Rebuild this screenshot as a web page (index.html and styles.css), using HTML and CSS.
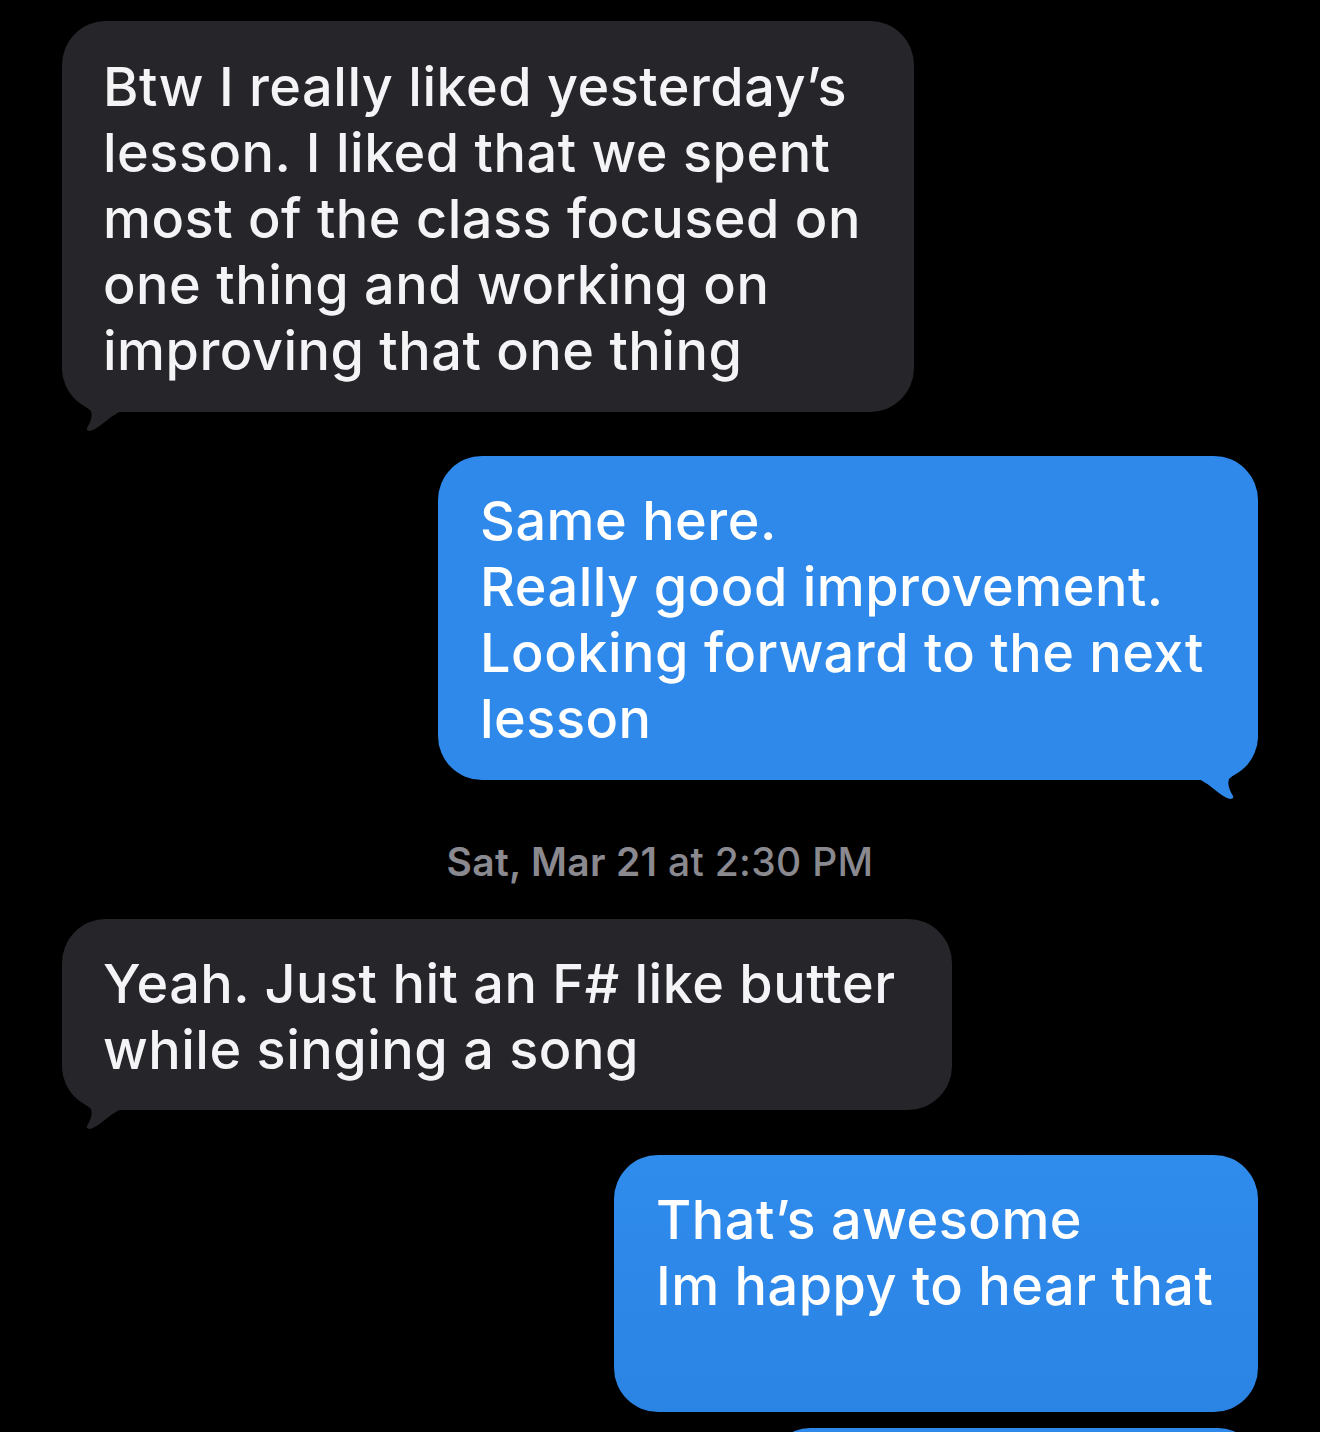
FILE: index.html
```html
<!DOCTYPE html>
<html>
<head>
<meta charset="utf-8">
<link rel="stylesheet" href="styles.css">
</head>
<body>
<div class="thread">
  <div class="bubble recv b1">
    <svg class="tail tail-left" width="80" height="75" viewBox="0 0 80 75"><path d="M0 6 C0 30 18 42 29 52 C31 58 28 64 25 69 Q24 72 28 72 C40 69 50 52 68 50 L80 50 L80 30 L44 6 Z"/></svg>
    <p class="text">Btw I really liked yesterday’s<br>lesson. I liked that we spent<br>most of the class focused on<br>one thing and working on<br>improving that one thing</p>
  </div>
  <div class="bubble sent b2">
    <svg class="tail tail-right" width="80" height="75" viewBox="0 0 80 75"><path d="M0 6 C0 30 18 42 29 52 C31 58 28 64 25 69 Q24 72 28 72 C40 69 50 52 68 50 L80 50 L80 30 L44 6 Z"/></svg>
    <p class="text">Same here.<br>Really good improvement.<br>Looking forward to the next<br>lesson</p>
  </div>
  <div class="stamp"><span class="day">Sat, Mar 21</span> at 2:30 PM</div>
  <div class="bubble recv b3">
    <svg class="tail tail-left" width="80" height="75" viewBox="0 0 80 75"><path d="M0 6 C0 30 18 42 29 52 C31 58 28 64 25 69 Q24 72 28 72 C40 69 50 52 68 50 L80 50 L80 30 L44 6 Z"/></svg>
    <p class="text">Yeah. Just hit an F# like butter<br>while singing a song</p>
  </div>
  <div class="bubble sent b4">
    <p class="text">That’s awesome<br>Im happy to hear that<br>&nbsp;</p>
  </div>
  <div class="bubble sent b5"></div>
</div>
</body>
</html>
```

FILE: styles.css
```css
html, body {
  margin: 0;
  padding: 0;
  background: #000;
}
body {
  width: 1320px;
  height: 1432px;
  overflow: hidden;
  font-family: Inter, "Noto Sans", sans-serif;
}
.thread {
  display: flex;
  flex-direction: column;
  padding: 21px 62px 0 62px;
  height: 1432px;
  box-sizing: border-box;
  overflow: hidden;
}
.bubble {
  position: relative;
  border-radius: 44px;
  box-sizing: border-box;
  flex-shrink: 0;
}
.recv {
  align-self: flex-start;
  background: #26252a;
  color: #f4f4f6;
  fill: #26252a;
}
.sent {
  align-self: flex-end;
  background: #2e89ea;
  color: #fff;
  fill: #2e89ea;
}
.text {
  position: relative;
  z-index: 1;
  margin: 0;
  font-size: 54px;
  line-height: 66px;
  font-weight: 500;
  letter-spacing: 0.5px;
  white-space: nowrap;
}
.tail {
  position: absolute;
  bottom: -22px;
  z-index: 0;
}
.tail-left { left: 0; }
.tail-right { right: 0; transform: scaleX(-1); }

.b1 { width: 852px; padding: 33px 42px 28px 41px; }
.b2 { width: 820px; padding: 32px 43px 28px 42px; margin-top: 44px; }
.stamp {
  margin-top: 60px;
  text-align: center;
  color: #8a898f;
  font-size: 39px;
  line-height: 44px;
  font-weight: 500;
  letter-spacing: 0.3px;
  flex-shrink: 0;
}
.stamp .day { font-weight: 600; }
.b3 { width: 890px; padding: 32px 42px 27px 41px; margin-top: 35px; }
.b4 {
  width: 644px;
  padding: 32px 43px 27px 42px;
  margin-top: 45px;
  background: linear-gradient(#2f8bec, #2a84e4);
}
.b5 { width: 488px; height: 80px; margin-top: 16px; }
```
